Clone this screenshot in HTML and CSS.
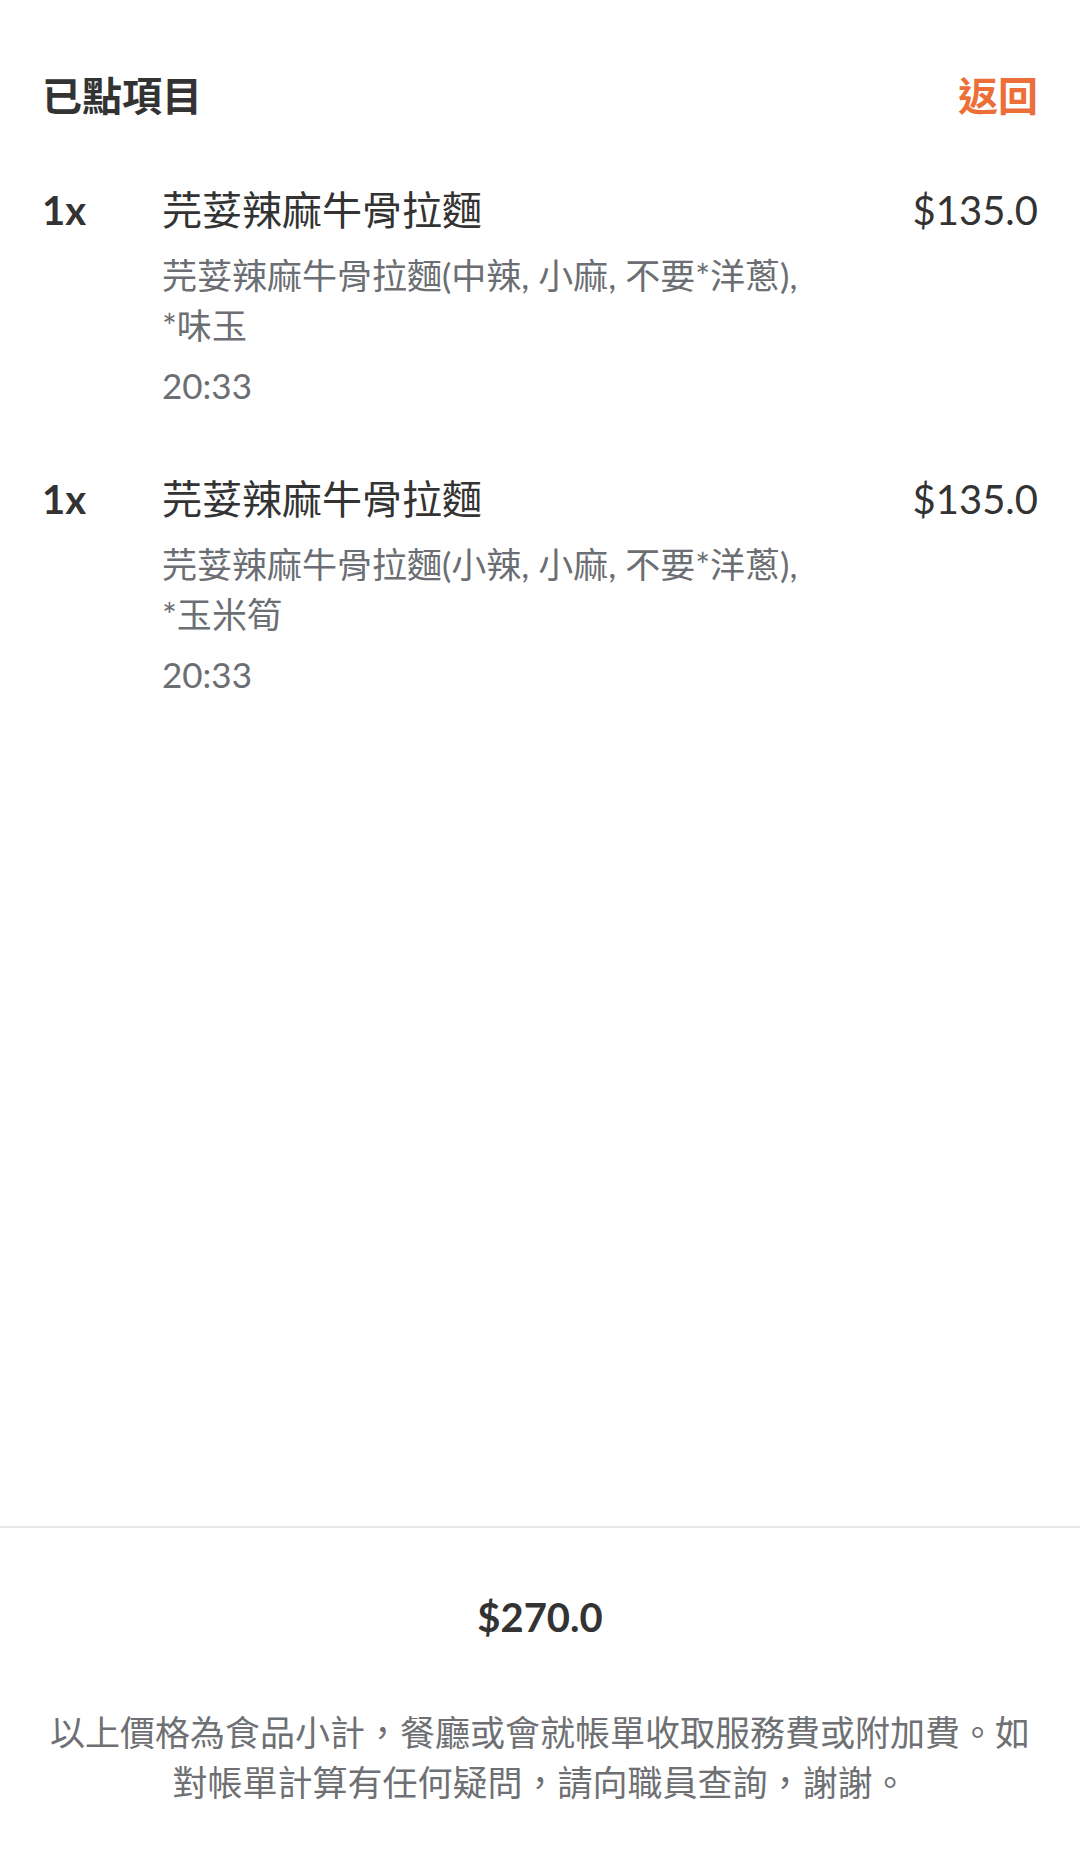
FILE: index.html
```html
<!DOCTYPE html>
<html lang="zh-Hant">
<head>
<meta charset="utf-8">
<title>已點項目</title>
<link rel="stylesheet" href="styles.css">
</head>
<body>
<div class="page">
  <header class="header">
    <h1 class="title">已點項目</h1>
    <a class="back">返回</a>
  </header>

  <main class="items">
    <div class="item">
      <div class="qty">1x</div>
      <div class="details">
        <div class="name">芫荽辣麻牛骨拉麵</div>
        <div class="desc">芫荽辣麻牛骨拉麵(中辣, 小麻, 不要*洋蔥), <span class="opt">*味玉</span></div>
        <div class="time">20:33</div>
      </div>
      <div class="price">$135.0</div>
    </div>

    <div class="item">
      <div class="qty">1x</div>
      <div class="details">
        <div class="name">芫荽辣麻牛骨拉麵</div>
        <div class="desc">芫荽辣麻牛骨拉麵(小辣, 小麻, 不要*洋蔥), <span class="opt">*玉米筍</span></div>
        <div class="time">20:33</div>
      </div>
      <div class="price">$135.0</div>
    </div>
  </main>

  <footer class="footer">
    <div class="total">$270.0</div>
    <p class="note">以上價格為食品小計，餐廳或會就帳單收取服務費或附加費。如對帳單計算有任何疑問，請向職員查詢，謝謝。</p>
  </footer>
</div>
</body>
</html>
```

FILE: styles.css
```css
* {
  box-sizing: border-box;
}

html, body {
  margin: 0;
  padding: 0;
  background: #ffffff;
}

body {
  font-family: Lato, "Noto Sans CJK TC", "Noto Sans", sans-serif;
  color: #333333;
}

.page {
  display: flex;
  flex-direction: column;
  min-height: 1858px;
}

.header {
  display: flex;
  justify-content: space-between;
  align-items: center;
  padding: 68px 42px 0 42px;
}

.title {
  margin: 0;
  font-size: 40px;
  line-height: 56px;
  font-weight: 700;
  color: #333333;
}

.back {
  font-size: 40px;
  line-height: 56px;
  font-weight: 700;
  color: #ec6f3a;
  cursor: pointer;
}

.items {
  flex: 1;
  display: flex;
  flex-direction: column;
  gap: 61px;
  padding: 58px 42px 0 42px;
}

.item {
  display: flex;
  align-items: flex-start;
}

.qty {
  width: 120px;
  flex: none;
  font-size: 40px;
  line-height: 56px;
  font-weight: 700;
  color: #333333;
}

.details {
  flex: 1;
  min-width: 0;
  padding-right: 24px;
}

.name {
  font-size: 40px;
  line-height: 56px;
  color: #333333;
}

.desc {
  max-width: 680px;
  margin-top: 12px;
  font-size: 35px;
  line-height: 50px;
  color: #6b6e72;
}

.opt {
  white-space: nowrap;
}

.time {
  margin-top: 10px;
  font-size: 35px;
  line-height: 50px;
  color: #6b6e72;
}

.price {
  flex: none;
  font-size: 40px;
  line-height: 56px;
  color: #333333;
  text-align: right;
}

.footer {
  border-top: 2px solid #e8e8ea;
  padding: 61px 42px 51px 42px;
  display: flex;
  flex-direction: column;
  align-items: center;
  gap: 62px;
}

.total {
  font-size: 40px;
  line-height: 56px;
  font-weight: 700;
  color: #333333;
}

.note {
  margin: 0;
  font-size: 35px;
  line-height: 50px;
  color: #6e7073;
  text-align: center;
}
```
